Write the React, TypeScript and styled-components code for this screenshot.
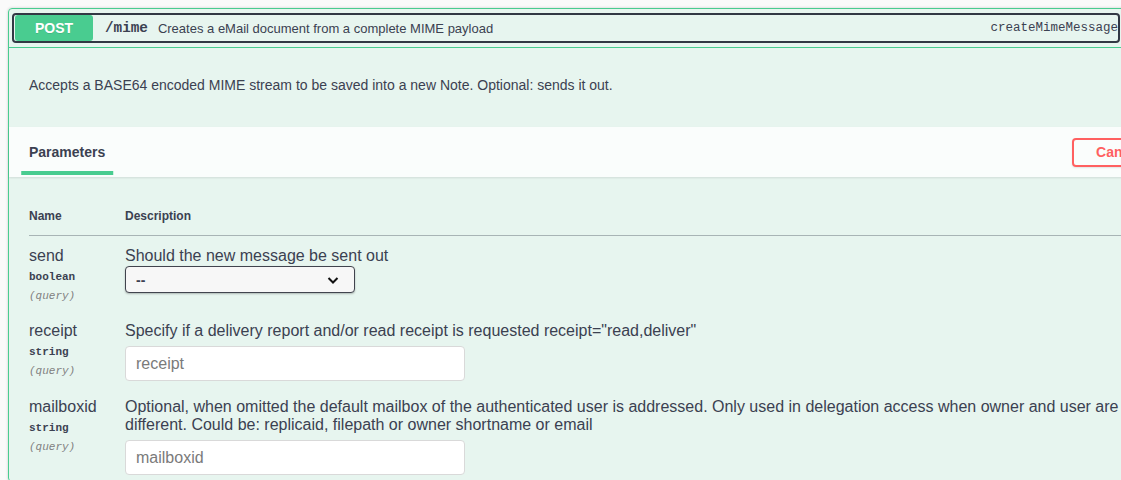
import React from "react";
import styled, { createGlobalStyle } from "styled-components";

const GlobalStyle = createGlobalStyle`
  * { box-sizing: border-box; }
  html, body {
    margin: 0;
    padding: 0;
    background: #fafafa;
    overflow: hidden;
  }
  body {
    font-family: "Liberation Sans", Arial, sans-serif;
    color: #3b4151;
  }
`;

const MONO = `"Liberation Mono", "DejaVu Sans Mono", monospace`;

const Page = styled.div`
  padding: 8px;
  width: 1195px;
`;

const Opblock = styled.div`
  width: 1179px;
  border: 1px solid #49cc90;
  border-radius: 4px;
  background: rgba(73, 204, 144, 0.1);
  box-shadow: 0 0 3px rgba(0, 0, 0, 0.19);
`;

const Summary = styled.div`
  display: flex;
  align-items: center;
  padding: 4px 3px 4px 3px;
  border-bottom: 1px solid #49cc90;
`;

const Control = styled.button`
  flex: 1;
  min-width: 0;
  display: flex;
  align-items: center;
  height: 30px;
  padding: 0 0 0 1px;
  border: 2px solid #323844;
  border-radius: 4px;
  background: transparent;
  color: #3b4151;
  font: inherit;
  text-align: left;
  cursor: pointer;
`;

const Method = styled.span`
  flex: none;
  display: flex;
  align-items: center;
  justify-content: center;
  width: 78px;
  height: 26px;
  border-radius: 3px;
  background: #49cc90;
  color: #fff;
  font-size: 14px;
  font-weight: 700;
  text-shadow: 0 1px 0 rgba(0, 0, 0, 0.1);
`;

const Path = styled.span`
  flex: none;
  margin-left: 12px;
  margin-right: 10px;
  font-family: ${MONO};
  font-size: 14.3px;
  font-weight: 700;
  color: #3b4151;
`;

const SummaryDesc = styled.span`
  flex: 1;
  font-size: 13px;
  color: #3b4151;
  white-space: nowrap;
`;

const OperationId = styled.span`
  flex: none;
  font-family: ${MONO};
  font-size: 12.5px;
  color: #3b4151;
`;

const AuthButton = styled.button`
  flex: none;
  width: 40px;
  margin-left: 3px;
  padding: 0 10px;
  border: none;
  background: transparent;
  display: flex;
  align-items: center;
`;

const Arrow = styled.svg`
  flex: none;
  width: 20px;
  height: 20px;
`;

const DescriptionWrapper = styled.div`
  padding: 15px 20px;
  margin-bottom: 5px;
  p {
    margin: 14px 0;
    font-size: 14px;
    line-height: 16px;
    color: #3b4151;
  }
`;

const SectionHeader = styled.div`
  display: flex;
  align-items: center;
  justify-content: space-between;
  min-height: 50px;
  padding: 8px 20px;
  background: rgba(255, 255, 255, 0.8);
  box-shadow: 0 1px 2px rgba(0, 0, 0, 0.1);
`;

const TabTitle = styled.h4`
  position: relative;
  margin: 0;
  font-size: 14px;
  line-height: 16px;
  font-weight: 700;
  color: #3b4151;
  &::after {
    content: "";
    position: absolute;
    left: 50%;
    bottom: -15px;
    width: 120%;
    height: 4px;
    transform: translateX(-50%);
    background: #49cc90;
  }
`;

const CancelButton = styled.button`
  padding: 5px 22px;
  border: 2px solid #ff6060;
  border-radius: 4px;
  background: transparent;
  color: #ff6060;
  font-family: "Liberation Sans", Arial, sans-serif;
  font-size: 14px;
  line-height: 15px;
  font-weight: 700;
  box-shadow: 0 1px 2px rgba(0, 0, 0, 0.1);
  cursor: pointer;
`;

const TableContainer = styled.div`
  padding: 20px 20px 0;
`;

const Table = styled.table`
  width: 100%;
  border-collapse: collapse;
`;

const Th = styled.th<{ $w?: number }>`
  width: ${(p) => (p.$w ? `${p.$w}px` : "auto")};
  padding: 12px 0;
  text-align: left;
  font-size: 12px;
  line-height: 14px;
  font-weight: 700;
  color: #3b4151;
  border-bottom: 1px solid rgba(59, 65, 81, 0.2);
`;

const Td = styled.td`
  vertical-align: top;
  padding: 11px 0 6px;
`;

const ParamName = styled.div`
  font-size: 16px;
  line-height: 18px;
  color: #3b4151;
`;

const ParamType = styled.div`
  margin-top: 3px;
  font-family: ${MONO};
  font-size: 11px;
  line-height: 18px;
  font-weight: 700;
  color: #3b4151;
`;

const ParamIn = styled.div`
  margin-top: 1px;
  font-family: ${MONO};
  font-size: 11px;
  line-height: 18px;
  font-style: italic;
  color: #808080;
`;

const ParamDesc = styled.div`
  font-size: 16px;
  line-height: 18px;
  color: #3b4151;
`;

const SelectWrap = styled.div`
  position: relative;
  margin-top: 1px;
  width: 230px;
  height: 27px;
`;

const Select = styled.select`
  appearance: none;
  width: 100%;
  height: 100%;
  padding: 0 40px 0 10px;
  border: 1.5px solid #41444e;
  border-radius: 4px;
  background: #f7f7f7;
  box-shadow: 0 1px 2px 0 rgba(0, 0, 0, 0.25);
  font-family: "Liberation Sans", Arial, sans-serif;
  font-size: 14px;
  font-weight: 700;
  color: #3b4151;
`;

const Chevron = styled.svg`
  position: absolute;
  right: 15px;
  top: 50%;
  width: 14px;
  height: 14px;
  transform: translateY(-50%);
  pointer-events: none;
`;

const TextInput = styled.input`
  display: block;
  margin-top: 6px;
  width: 340px;
  height: 35px;
  padding: 8px 10px;
  border: 1px solid #d9d9d9;
  border-radius: 4px;
  background: #fff;
  font-family: "Liberation Sans", Arial, sans-serif;
  font-size: 16px;
  color: #3b4151;
  &::placeholder {
    color: #7a7a7a;
  }
`;

type Param = {
  name: string;
  type: string;
  desc: string;
  kind: "select" | "input";
};

const params: Param[] = [
  { name: "send", type: "boolean", desc: "Should the new message be sent out", kind: "select" },
  {
    name: "receipt",
    type: "string",
    desc: 'Specify if a delivery report and/or read receipt is requested receipt="read,deliver"',
    kind: "input",
  },
  {
    name: "mailboxid",
    type: "string",
    desc:
      "Optional, when omitted the default mailbox of the authenticated user is addressed. Only used in delegation access when owner and user are different. Could be: replicaid, filepath or owner shortname or email",
    kind: "input",
  },
];

export default function App() {
  return (
    <>
      <GlobalStyle />
      <Page>
        <Opblock>
          <Summary>
            <Control>
              <Method>POST</Method>
              <Path>/mime</Path>
              <SummaryDesc>Creates a eMail document from a complete MIME payload</SummaryDesc>
              <OperationId>createMimeMessage</OperationId>
            </Control>
            <AuthButton aria-label="authorization">
              <svg width="20" height="20" viewBox="0 0 20 20">
                <path
                  d="M15.8 8H14V5.6C14 2.703 12.665 1 10 1 7.334 1 6 2.703 6 5.6V6h2v-.801C8 3.754 8.797 3 10 3c1.203 0 2 .754 2 2.199V8H4c-.553 0-1 .646-1 1.199V17c0 .549.428 1.139.951 1.307l1.197.387C5.672 18.861 6.55 19 7.1 19h5.8c.549 0 1.428-.139 1.951-.307l1.196-.387c.524-.167.953-.757.953-1.306V9.199C17 8.646 16.352 8 15.8 8z"
                  fill="#3b4151"
                />
              </svg>
            </AuthButton>
            <Arrow viewBox="0 0 20 20">
              <path d="M4 7l6 6 6-6" fill="none" stroke="#3b4151" strokeWidth="2" />
            </Arrow>
          </Summary>

          <DescriptionWrapper>
            <p>Accepts a BASE64 encoded MIME stream to be saved into a new Note. Optional: sends it out.</p>
          </DescriptionWrapper>

          <SectionHeader>
            <TabTitle>Parameters</TabTitle>
            <CancelButton>Cancel</CancelButton>
          </SectionHeader>

          <TableContainer>
            <Table>
              <thead>
                <tr>
                  <Th $w={96}>Name</Th>
                  <Th>Description</Th>
                </tr>
              </thead>
              <tbody>
                {params.map((p) => (
                  <tr key={p.name}>
                    <Td>
                      <ParamName>{p.name}</ParamName>
                      <ParamType>{p.type}</ParamType>
                      <ParamIn>(query)</ParamIn>
                    </Td>
                    <Td>
                      <ParamDesc>{p.desc}</ParamDesc>
                      {p.kind === "select" ? (
                        <SelectWrap>
                          <Select defaultValue="">
                            <option value="">--</option>
                            <option value="true">true</option>
                            <option value="false">false</option>
                          </Select>
                          <Chevron viewBox="0 0 14 14">
                            <path d="M2.5 5l4.5 4.5L11.5 5" fill="none" stroke="#111" strokeWidth="2" />
                          </Chevron>
                        </SelectWrap>
                      ) : (
                        <TextInput placeholder={p.name} />
                      )}
                    </Td>
                  </tr>
                ))}
              </tbody>
            </Table>
          </TableContainer>
        </Opblock>
      </Page>
    </>
  );
}
